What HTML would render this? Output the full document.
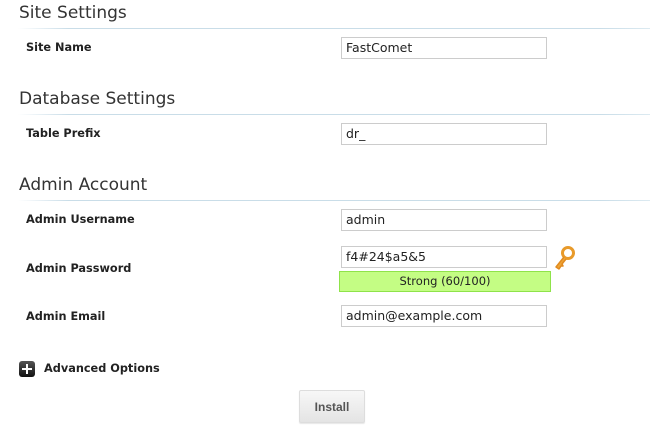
<!DOCTYPE html>
<html><head><style>
body{margin:0;width:650px;height:435px;background:#fff;font-family:"DejaVu Sans",Verdana,sans-serif;color:#222;position:relative;overflow:hidden}
.h{position:absolute;left:19px;font-size:17px;color:#333;font-weight:normal}
.ln{position:absolute;left:18px;width:632px;height:1px;background:linear-gradient(to right,#fff,#c9dde8 8%,#c9dde8 92%,#dceaf1)}
.l{position:absolute;left:26px;font-size:11.3px;font-weight:bold;color:#222}
.in{position:absolute;left:341px;height:20px;border:1px solid #ccc;box-sizing:content-box;font-size:12.5px;line-height:20px;padding-left:4px;width:200px;color:#222}
</style></head><body>
<div class="h" style="top:3px">Site Settings</div><div class="ln" style="top:28px"></div>
<div class="l" style="top:41px">Site Name</div>
<div class="in" style="top:37px">FastComet</div>

<div class="h" style="top:89px">Database Settings</div><div class="ln" style="top:114px"></div>
<div class="l" style="top:127px">Table Prefix</div>
<div class="in" style="top:123px">dr_</div>

<div class="h" style="top:175px">Admin Account</div><div class="ln" style="top:200px"></div>
<div class="l" style="top:213px">Admin Username</div>
<div class="in" style="top:209px">admin</div>
<div class="l" style="top:262px">Admin Password</div>
<div class="in" style="top:246px">f4#24$a5&amp;5</div>
<div style="position:absolute;left:339px;top:271px;width:210px;height:19px;background:#c4fd84;border:1px solid #8fe34a;font-size:11.5px;line-height:19px;text-align:center;color:#222">Strong (60/100)</div>
<svg style="position:absolute;left:552px;top:244px" width="26" height="28" viewBox="0 0 26 28">
<circle cx="16" cy="9" r="5.5" fill="none" stroke="#e89a2a" stroke-width="3"/>
<path d="M12 13 L4 23 L7 25 L9 22 L11 22 L10 20 L14 15" fill="#f0a535" stroke="#e08a20" stroke-width="1.5" stroke-linejoin="round"/>
</svg>
<div class="l" style="top:310px">Admin Email</div>
<div class="in" style="top:305px">admin@example.com</div>

<div style="position:absolute;left:19px;top:361px;width:16px;height:16px;border-radius:3px;background:linear-gradient(#555,#111)"><div style="position:absolute;left:7px;top:3px;width:2px;height:10px;background:#fff"></div><div style="position:absolute;left:3px;top:7px;width:10px;height:2px;background:#fff"></div></div>
<div class="l" style="top:362px;left:44px">Advanced Options</div>

<div style="position:absolute;left:299px;top:390px;width:64px;height:31px;border:1px solid #ddd;border-radius:2px;background:linear-gradient(#f7f7f7,#e4e4e4);font-family:'Liberation Sans',Arial,sans-serif;font-size:12px;font-weight:bold;color:#555;text-align:center;line-height:32px;box-shadow:0 1px 1px rgba(0,0,0,.1)">Install</div>
</body></html>
